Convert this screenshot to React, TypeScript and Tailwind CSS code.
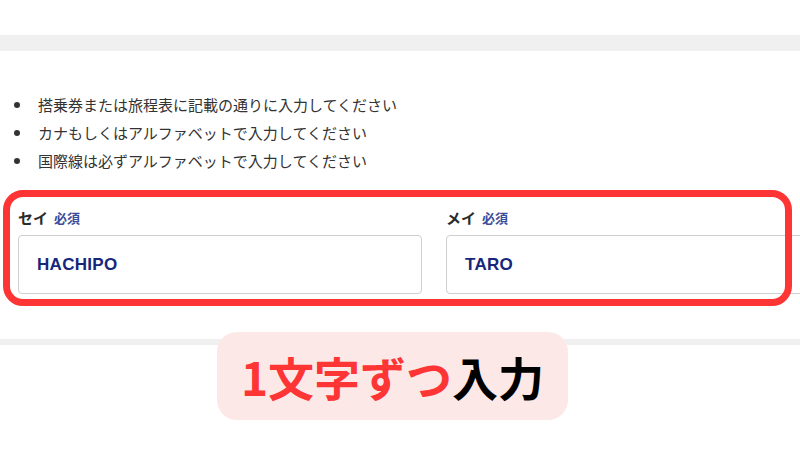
import React from "react";

const jp = { fontFamily: '"Noto Sans CJK JP", "Noto Sans", sans-serif' };
const latin = { fontFamily: '"Liberation Sans", Arial, "Noto Sans CJK JP", sans-serif' };

function Field({ label, value }: { label: string; value: string }) {
  return (
    <div className="flex w-[404px] shrink-0 flex-col">
      <div className="flex h-[20px] items-center gap-[6px]" style={jp}>
        <span className="text-[15px] font-bold text-[#2b2b2b]">{label}</span>
        <span className="text-[13px] font-bold text-[#3a4c9c]">必須</span>
      </div>
      <div className="mt-[7px] flex h-[59px] items-center rounded-[4px] border border-[#cfcfcf] bg-white pl-[18px]">
        <span className="text-[17px] font-bold tracking-[0.3px] text-[#16267a]" style={latin}>
          {value}
        </span>
      </div>
    </div>
  );
}

export default function App() {
  const notes = [
    "搭乗券または旅程表に記載の通りに入力してください",
    "カナもしくはアルファベットで入力してください",
    "国際線は必ずアルファベットで入力してください",
  ];
  return (
    <div className="relative h-[450px] w-[800px] overflow-hidden bg-white" style={jp}>
      <div className="h-[35px]" />
      <div className="h-[16px] bg-[#f0f0f0]" />
      <ul className="mt-[40px] pl-[38px] text-[15px] leading-[28px] text-[#333333]">
        {notes.map((n) => (
          <li key={n} className="relative">
            <span className="absolute left-[-24px] top-[11px] h-[6px] w-[6px] rounded-full bg-[#333333]" />
            {n}
          </li>
        ))}
      </ul>
      <div className="mt-[33px] flex gap-[24px] pl-[18px]">
        <Field label="セイ" value="HACHIPO" />
        <Field label="メイ" value="TARO" />
      </div>
      <div className="mt-[45px] h-[6px] bg-[#f0f0f0]" />

      <div className="pointer-events-none absolute left-[3px] top-[190px] h-[116px] w-[789px] rounded-[20px] border-[7px] border-[#fe3535]" />

      <div className="absolute left-[217px] top-[332px] flex h-[88px] w-[351px] items-center justify-center rounded-[20px] bg-[#fde8e8]">
        <span className="whitespace-nowrap text-[46px] font-bold leading-none" style={jp}>
          <span className="text-[#fe3535]">1文字ずつ</span>
          <span className="text-black">入力</span>
        </span>
      </div>
    </div>
  );
}
